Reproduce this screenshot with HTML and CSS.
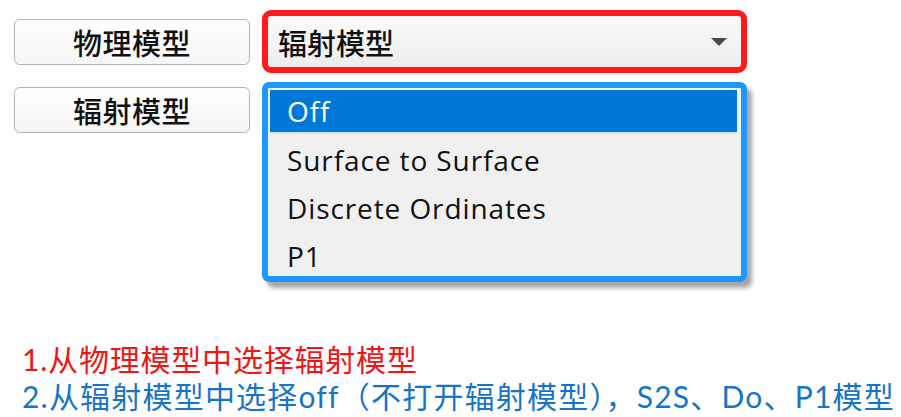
FILE: index.html
```html
<!DOCTYPE html>
<html lang="zh-CN">
<head>
<meta charset="utf-8">
<title>辐射模型</title>
<link rel="stylesheet" href="styles.css">
</head>
<body>
<div class="page">
  <div class="top">
    <div class="labels">
      <div class="btn">物理模型</div>
      <div class="btn">辐射模型</div>
    </div>
    <div class="fields">
      <div class="combo">
        <span class="combo-text">辐射模型</span>
        <svg class="arrow" width="16" height="8" viewBox="0 0 16 8"><polygon points="0,0 16,0 8,8" fill="#4a4a4a"/></svg>
      </div>
      <div class="menu">
        <div class="item selected">Off</div>
        <div class="item">Surface to Surface</div>
        <div class="item">Discrete Ordinates</div>
        <div class="item">P1</div>
      </div>
    </div>
  </div>
  <div class="notes">
    <div class="note red">1.从物理模型中选择辐射模型</div>
    <div class="note blue">2.从辐射模型中选择off（不打开辐射模型），S2S、Do、P1模型</div>
  </div>
</div>
</body>
</html>
```
FILE: styles.css
```css
html, body {
  margin: 0;
  padding: 0;
  background: #ffffff;
}
.page {
  width: 901px;
  height: 417px;
  overflow: hidden;
}
.top {
  display: flex;
  gap: 12px;
  padding: 10px 0 0 14px;
}
.labels {
  display: flex;
  flex-direction: column;
  gap: 22px;
  padding-top: 9px;
}
.btn {
  box-sizing: border-box;
  width: 236px;
  height: 46px;
  border: 1.5px solid #b4b4b4;
  border-radius: 6px;
  background: linear-gradient(#ffffff, #f6f6f6);
  display: flex;
  align-items: center;
  justify-content: center;
  font-family: "Noto Sans CJK SC", sans-serif;
  font-size: 29px;
  font-weight: 500;
  letter-spacing: 0.5px;
  color: #111;
}
.fields {
  display: flex;
  flex-direction: column;
  gap: 9px;
}
.combo {
  box-sizing: border-box;
  width: 485px;
  height: 63px;
  border: 6px solid #ff1b1b;
  border-radius: 9px;
  background: linear-gradient(#fbfbfb, #ececec);
  display: flex;
  align-items: center;
  justify-content: space-between;
  padding: 0 14px 0 10px;
}
.combo-text {
  font-family: "Noto Sans CJK SC", sans-serif;
  font-size: 29px;
  font-weight: 500;
  color: #111;
}
.arrow {
  display: block;
}
.menu {
  box-sizing: border-box;
  width: 485px;
  height: 200px;
  border: 6px solid #1e98ff;
  border-radius: 7px;
  background: #f0f0f0;
  padding: 2px 4px 0 2px;
  box-shadow: 5px 6px 4px rgba(0, 0, 0, 0.35);
  font-family: "Open Sans", "Noto Sans", sans-serif;
  font-size: 28px;
  letter-spacing: 0.9px;
  color: #111;
}
.item {
  box-sizing: border-box;
  height: 48px;
  display: flex;
  align-items: center;
  padding: 4px 0 0 17px;
}
.item.selected {
  height: 44px;
  padding-top: 0;
  background: #0078d7;
  color: #ffffff;
  border-bottom: 2px solid #cfe8ff;
}
.notes {
  margin-top: 59px;
  padding-left: 22px;
  font-family: "Lato", "Noto Sans CJK SC", sans-serif;
  font-size: 30px;
  line-height: 37px;
}
.note {
  white-space: nowrap;
}
.red {
  color: #f01414;
  letter-spacing: 0.8px;
}
.blue {
  color: #1674c8;
  letter-spacing: 1.2px;
}
```
